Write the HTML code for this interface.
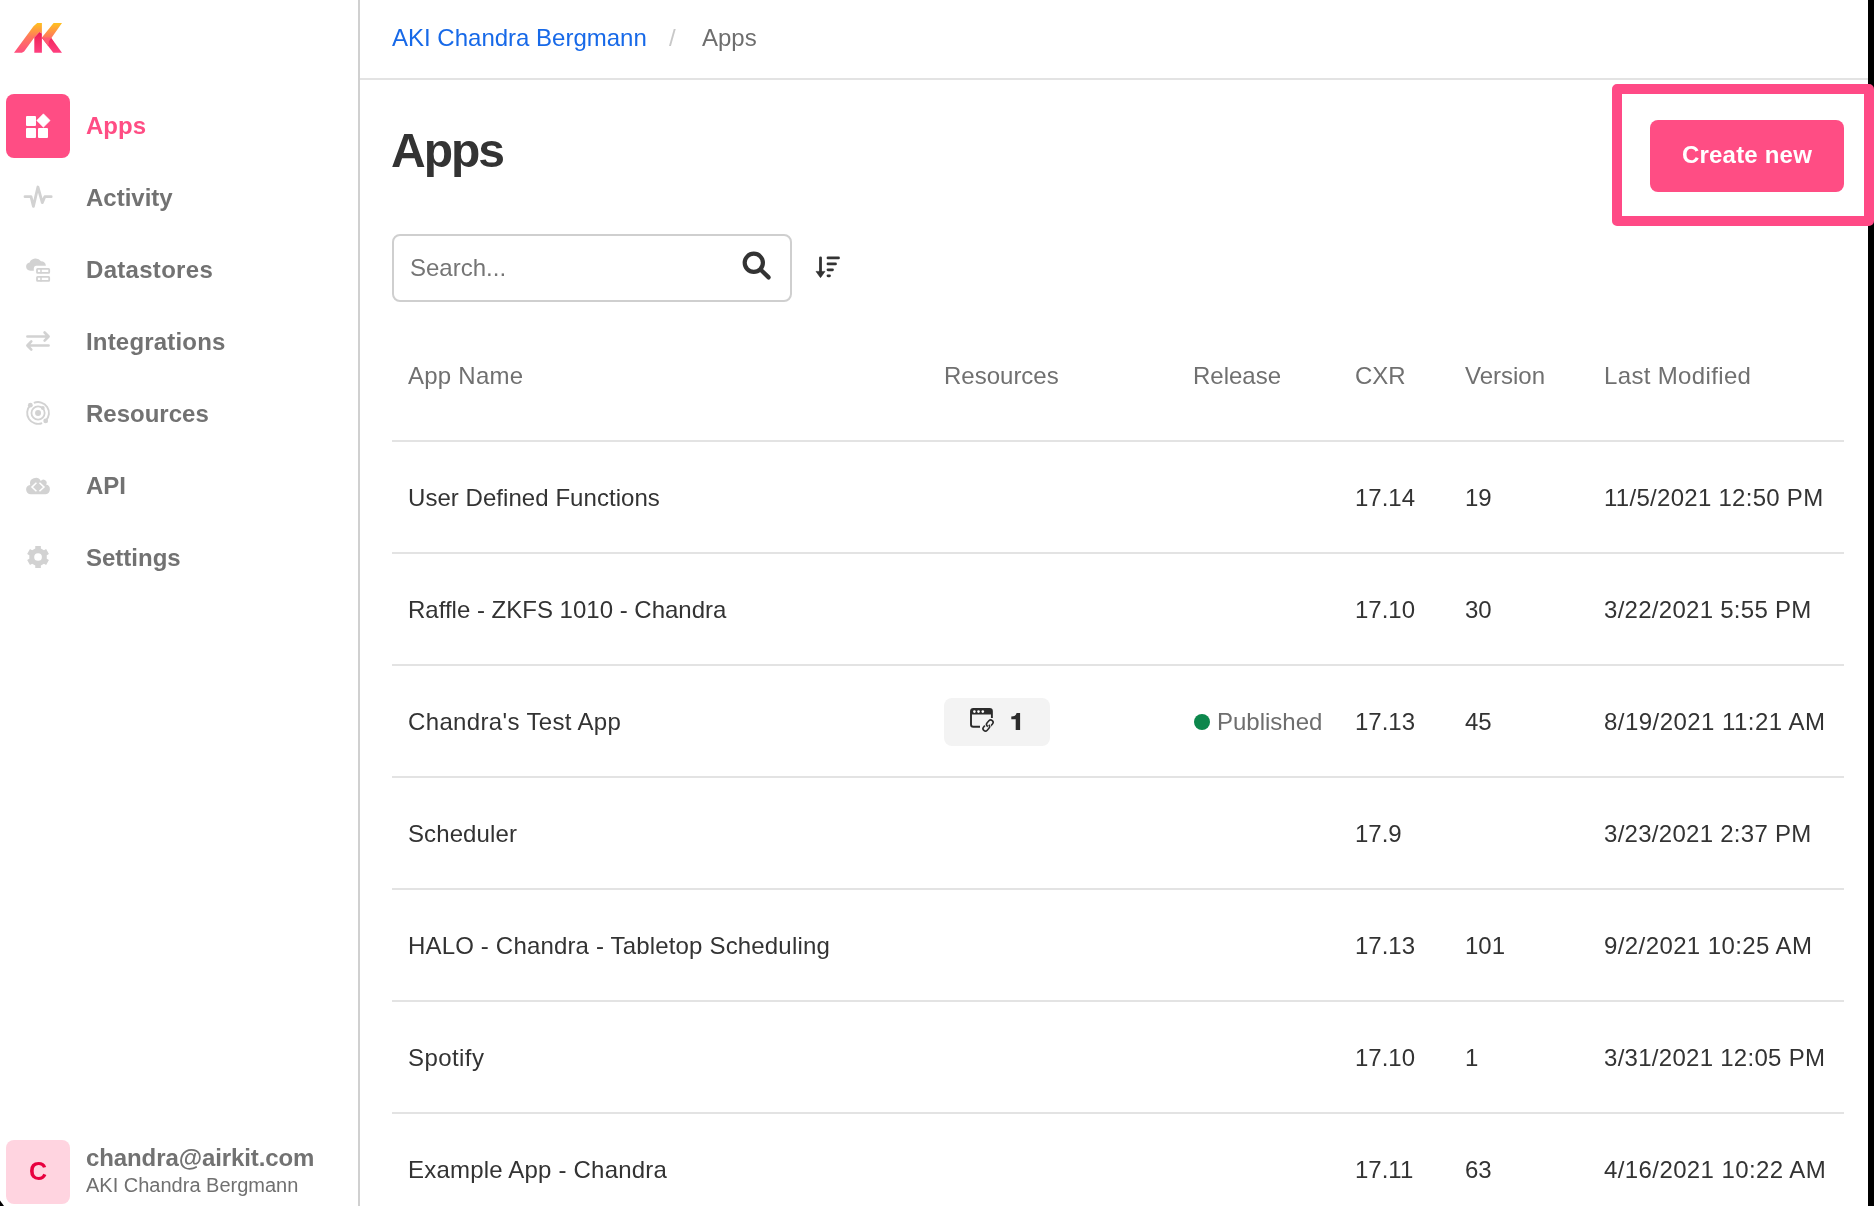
<!DOCTYPE html>
<html>
<head>
<meta charset="utf-8">
<style>
html,body{margin:0;padding:0;}
body{width:1874px;height:1206px;position:relative;overflow:hidden;background:#fff;font-family:"Liberation Sans",sans-serif;}
.a{position:absolute;white-space:nowrap;will-change:transform;}
.t24{font-size:24px;line-height:24px;}
.t20{font-size:20px;line-height:20px;}
.b{font-weight:bold;}
#sidebar{position:absolute;left:0;top:0;width:358px;height:1206px;border-right:2px solid #d0d0d0;}
#hdr{position:absolute;left:360px;top:78px;width:1514px;height:2px;background:#e3e3e3;}
.nav{color:#727272;font-weight:bold;}
.ico{position:absolute;z-index:2;}
.hline{position:absolute;left:392px;width:1452px;height:2px;background:#e3e3e3;}
.th{color:#707070;}
.td{color:#333333;}
#blackstrip{position:absolute;left:1868px;top:0;width:6px;height:1206px;background:#000;}
</style>
</head>
<body>
<div id="sidebar"></div>
<div id="hdr"></div>
<div id="blackstrip"></div>
<svg class="ico" style="left:0;top:1196px" width="10" height="10" viewBox="0 1196 10 10"><path d="M0,1200.5 L4,1206 L0,1206 Z" fill="#000"/></svg>

<!-- logo -->
<svg class="ico" style="left:0;top:0" width="80" height="70" viewBox="0 0 80 70">
  <defs>
    <linearGradient id="lg1" x1="0" y1="23" x2="0" y2="53" gradientUnits="userSpaceOnUse">
      <stop offset="0" stop-color="#FFC21E"/>
      <stop offset="0.45" stop-color="#FF7A5A"/>
      <stop offset="1" stop-color="#FF4D80"/>
    </linearGradient>
    <linearGradient id="lg2" x1="0" y1="32" x2="0" y2="53" gradientUnits="userSpaceOnUse">
      <stop offset="0" stop-color="#EC1C50"/>
      <stop offset="1" stop-color="#FF4080"/>
    </linearGradient>
  </defs>
  <path d="M14,52.7 L21.9,52.7 L24.1,51.6 L34.3,37.5 L39.4,32.1 L41.9,33.5 L41.9,23.1 L37.2,23.1 L33.5,26.2 Z" fill="url(#lg1)"/>
  <path d="M34.3,52.7 L41.9,52.7 L41.9,33.5 L39.4,32.1 L34.3,37.5 Z" fill="url(#lg2)"/>
  <path d="M41.9,37.5 L53.6,23.1 L62,23.1 L51.4,37.9 L53.6,42 L41.9,37.9 Z" fill="url(#lg1)"/>
  <path d="M41.9,37.9 L51.4,38.3 L62,52.7 L53.3,52.7 Z" fill="url(#lg2)"/>
  <path d="M41.9,37.6 L51.6,37.6 L48.9,41.3 L48.6,45.2 L47.8,45.6 Z" fill="#FF5C72"/>
</svg>

<!-- nav active -->
<div class="a" style="left:6px;top:94px;width:64px;height:64px;border-radius:8px;background:#FF4D84;"></div>
<svg class="ico" style="left:0;top:88px" width="80" height="80" viewBox="0 88 80 80">
  <rect x="26" y="116" width="10" height="10" rx="1" fill="#fff"/>
  <rect x="26" y="128" width="10" height="10" rx="1" fill="#fff"/>
  <rect x="38" y="128" width="10" height="10" rx="1" fill="#fff"/>
  <path d="M43.4,113.8 L50.1,120.5 L43.4,127.2 L36.7,120.5 Z" fill="#fff" stroke="#fff" stroke-width="0.6" stroke-linejoin="round"/>
</svg>
<div class="a t24 b" style="left:86px;top:113.7px;color:#FF4D84;">Apps</div>

<div class="a t24 nav" style="left:86px;top:185.7px;">Activity</div>
<div class="a t24 nav" style="left:86px;top:257.7px;letter-spacing:0.3px;">Datastores</div>
<div class="a t24 nav" style="left:86px;top:329.7px;letter-spacing:0.18px;">Integrations</div>
<div class="a t24 nav" style="left:86px;top:401.7px;">Resources</div>
<div class="a t24 nav" style="left:86px;top:473.7px;">API</div>
<div class="a t24 nav" style="left:86px;top:545.7px;">Settings</div>


<!-- sidebar inactive icons -->
<svg class="ico" style="left:0;top:170px" width="80" height="420" viewBox="0 170 80 420">
  <g fill="none" stroke="#d2d2d2" stroke-linecap="round" stroke-linejoin="round">
    <polyline stroke-width="2.8" points="25,196.7 31,196.7 33.4,206.4 37.9,187 42.3,202.6 44.8,196.7 51.2,196.7"/>
    <path stroke-width="2.6" d="M27.4,336.5 H47.6 M44.6,332.5 L48.6,336.5 L44.6,340.6 M48.6,345.5 H28.4 M31.3,341.4 L27.4,345.5 L31.3,349.6"/>
    <path stroke-width="1.9" stroke-linecap="butt" d="M33.84,402.94 A10.9,10.9 0 0 1 45.62,420.84 M42.13,423.11 A10.9,10.9 0 0 1 30.41,405.23"/>
    <circle cx="38.05" cy="413" r="6.6" stroke-width="1.8"/>
    <rect x="37" y="268.9" width="12.2" height="4" rx="0.6" stroke-width="1.8"/>
    <rect x="37" y="276.9" width="12.2" height="4" rx="0.6" stroke-width="1.8"/>
    <path stroke-width="1.5" d="M41,268.9 V272.9 M41,276.9 V280.9"/>
  </g>
  <g fill="#d2d2d2">
    <circle cx="30.34" cy="405.15" r="2.4"/>
    <circle cx="45.69" cy="420.91" r="2.4"/>
    <circle cx="42.82" cy="407.88" r="1.9"/>
    <circle cx="38.05" cy="413" r="3"/>
    <!-- datastore cloud -->
    <path d="M26.1,266.6 A4.3,4.3 0 0 1 29.6,262.4 A6.6,6.6 0 0 1 41,261.2 A5,5 0 0 1 45.9,265.7 L36,265.7 A2.6,2.6 0 0 0 33.8,268.2 L33.8,270.7 L30.4,270.7 A4.3,4.3 0 0 1 26.1,266.6 Z"/>
    <!-- api cloud -->
    <path d="M26.1,489.6 A4.7,4.7 0 0 1 30.2,484.9 A5.7,5.7 0 0 1 40.8,480.9 A3,3 0 0 1 46,484.6 A4.8,4.8 0 0 1 49.9,489.6 A4.7,4.7 0 0 1 45.2,494.3 L30.8,494.3 A4.7,4.7 0 0 1 26.1,489.6 Z"/>
    <path d="M35.25,548.55 L35.25,546.05 L40.85,546.05 L40.85,548.55 L43.97,550.35 L46.13,549.10 L48.93,553.95 L46.77,555.20 L46.77,558.80 L48.93,560.05 L46.13,564.90 L43.97,563.65 L40.85,565.45 L40.85,567.95 L35.25,567.95 L35.25,565.45 L32.13,563.65 L29.97,564.90 L27.17,560.05 L29.33,558.80 L29.33,555.20 L27.17,553.95 L29.970,549.10 L32.13,550.35Z"/>
  </g>
  <circle cx="38.05" cy="557" r="3.85" fill="#fff"/>
  <path d="M35.9,483.3 L31.95,487.1 L35.9,490.8 M40,483.3 L44,487.1 L40,490.8" fill="none" stroke="#fff" stroke-width="1.5" stroke-linecap="square"/>
</svg>

<!-- search icon -->
<svg class="ico" style="left:730px;top:240px" width="50" height="50" viewBox="730 240 50 50">
  <circle cx="753.8" cy="262.8" r="9.1" fill="none" stroke="#333" stroke-width="4.2"/>
  <path d="M761.5,270.5 L768.6,277.4" stroke="#333" stroke-width="4.3" stroke-linecap="round"/>
</svg>

<!-- sort icon -->
<svg class="ico" style="left:805px;top:245px" width="45" height="40" viewBox="805 245 45 40">
  <g stroke="#333" stroke-width="2.8" stroke-linecap="round" fill="none">
    <path d="M820.5,257.8 V272"/>
    <path d="M828,257.9 H838.5 M828,263.9 H835.5 M828,269.85 H832.5 M828,275.8 H829.5"/>
  </g>
  <path d="M816,271.4 L825,271.4 L820.5,277.7 Z" fill="#333" stroke="#333" stroke-width="0.6" stroke-linejoin="round"/>
</svg>

<!-- badge icon -->
<svg class="ico" style="left:960px;top:700px" width="40" height="40" viewBox="960 700 40 40">
  <path d="M980,726.8 H973.3 A2.3,2.3 0 0 1 971,724.5 V711 A2.3,2.3 0 0 1 973.3,708.9 H989.6 A2.3,2.3 0 0 1 991.9,711.2 V718" fill="none" stroke="#2b2b2b" stroke-width="1.9"/>
  <rect x="971" y="708.9" width="20.9" height="5.6" rx="1.5" fill="#2b2b2b"/>
  <circle cx="974.4" cy="711.6" r="1.3" fill="#fff"/>
  <circle cx="978.5" cy="711.6" r="1.3" fill="#fff"/>
  <circle cx="982.8" cy="711.6" r="1.3" fill="#fff"/>
  <g fill="none" stroke="#f3f3f3" stroke-width="3.6">
    <rect x="-3.7" y="-2.4" width="7.4" height="4.8" rx="2.4" transform="translate(989.8,723.4) rotate(-48)"/>
    <rect x="-3.7" y="-2.4" width="7.4" height="4.8" rx="2.4" transform="translate(986.3,727.6) rotate(-48)"/>
  </g>
  <rect x="-3.7" y="-2.4" width="7.4" height="4.8" rx="2.4" fill="none" stroke="#2b2b2b" stroke-width="1.6" transform="translate(989.8,723.4) rotate(-48)"/>
  <path d="M0.5,-2.4 H-1.3 A2.4,2.4 0 0 0 -1.3,2.4 H1.3 A2.4,2.4 0 0 0 3.7,0" fill="none" stroke="#f3f3f3" stroke-width="3.2" transform="translate(986.3,727.6) rotate(-48)"/>
  <path d="M0.5,-2.4 H-1.3 A2.4,2.4 0 0 0 -1.3,2.4 H1.3 A2.4,2.4 0 0 0 3.7,0" fill="none" stroke="#2b2b2b" stroke-width="1.6" transform="translate(986.3,727.6) rotate(-48)"/>
</svg>

<!-- user -->
<div class="a" style="left:6px;top:1140px;width:64px;height:64px;border-radius:8px;background:#FFD4E0;"></div>
<div class="a b" style="left:6px;top:1158.5px;width:64px;text-align:center;color:#E8003F;font-size:25px;line-height:25px;">C</div>
<div class="a t24 b" style="left:86px;top:1145.7px;color:#727272;letter-spacing:-0.1px;">chandra@airkit.com</div>
<div class="a t20" style="left:86px;top:1175px;color:#707070;">AKI Chandra Bergmann</div>

<!-- breadcrumb -->
<div class="a t24" style="left:392px;top:25.7px;color:#1769E8;">AKI Chandra Bergmann</div>
<div class="a t24" style="left:669px;top:25.7px;color:#c8c8c8;">/</div>
<div class="a t24" style="left:702px;top:25.7px;color:#6e6e6e;">Apps</div>

<!-- title -->
<div class="a b" style="left:391px;top:127.4px;font-size:48px;line-height:48px;letter-spacing:-2px;color:#333333;">Apps</div>

<!-- search -->
<div class="a" style="left:392px;top:234px;width:396px;height:64px;border:2px solid #cfcfcf;border-radius:8px;"></div>
<div class="a t24" style="left:410px;top:256px;color:#757575;">Search...</div>

<!-- create new -->
<div class="a" style="left:1612px;top:84px;width:262px;height:142px;box-sizing:border-box;border:10px solid #FF4A86;border-radius:5px;"></div>
<div class="a" style="left:1650px;top:120px;width:194px;height:72px;border-radius:8px;background:#FF4D84;"></div>
<div class="a t24 b" style="left:1650px;top:143.4px;width:194px;text-align:center;color:#fff;letter-spacing:0.2px;">Create new</div>

<!-- table -->
<div class="a t24 th" style="left:408px;top:363.7px;letter-spacing:0.25px;">App Name</div>
<div class="a t24 th" style="left:944px;top:363.7px;">Resources</div>
<div class="a t24 th" style="left:1193px;top:363.7px;">Release</div>
<div class="a t24 th" style="left:1355px;top:363.7px;">CXR</div>
<div class="a t24 th" style="left:1465px;top:363.7px;">Version</div>
<div class="a t24 th" style="left:1604px;top:363.7px;letter-spacing:0.35px;">Last Modified</div>

<div class="hline" style="top:440px"></div>
<div class="hline" style="top:552px"></div>
<div class="hline" style="top:664px"></div>
<div class="hline" style="top:776px"></div>
<div class="hline" style="top:888px"></div>
<div class="hline" style="top:1000px"></div>
<div class="hline" style="top:1112px"></div>

<div class="a t24 td" style="letter-spacing:0.05px;left:408px;top:485.7px;">User Defined Functions</div>
<div class="a t24 td" style="left:1355px;top:485.7px;">17.14</div>
<div class="a t24 td" style="left:1465px;top:485.7px;">19</div>
<div class="a t24 td" style="letter-spacing:0.28px;left:1604px;top:485.7px;">11/5/2021 12:50 PM</div>

<div class="a t24 td" style="letter-spacing:0px;left:408px;top:597.7px;">Raffle - ZKFS 1010 - Chandra</div>
<div class="a t24 td" style="left:1355px;top:597.7px;">17.10</div>
<div class="a t24 td" style="left:1465px;top:597.7px;">30</div>
<div class="a t24 td" style="letter-spacing:0.28px;left:1604px;top:597.7px;">3/22/2021 5:55 PM</div>

<div class="a t24 td" style="letter-spacing:0.35px;left:408px;top:709.7px;">Chandra's Test App</div>
<div class="a" style="left:944px;top:698px;width:106px;height:48px;border-radius:8px;background:#f3f3f3;"></div>
<svg class="ico" style="left:1005px;top:708px" width="20" height="26" viewBox="1005 708 20 26"><path d="M1015.7,730 L1020.1,730 L1020.1,713 L1016.6,713 C1016.2,715.6 1014.2,716.3 1011.3,716.4 L1011.3,719.2 L1015.7,719.2 Z" fill="#2b2b2b"/></svg>
<div class="a" style="left:1194px;top:714px;width:16px;height:16px;border-radius:50%;background:#0C874C;"></div>
<div class="a t24" style="left:1217px;top:709.7px;color:#6e6e6e;">Published</div>
<div class="a t24 td" style="left:1355px;top:709.7px;">17.13</div>
<div class="a t24 td" style="left:1465px;top:709.7px;">45</div>
<div class="a t24 td" style="letter-spacing:0.46px;left:1604px;top:709.7px;">8/19/2021 11:21 AM</div>

<div class="a t24 td" style="letter-spacing:0.1px;left:408px;top:821.7px;">Scheduler</div>
<div class="a t24 td" style="left:1355px;top:821.7px;">17.9</div>
<div class="a t24 td" style="letter-spacing:0.28px;left:1604px;top:821.7px;">3/23/2021 2:37 PM</div>

<div class="a t24 td" style="letter-spacing:0.17px;left:408px;top:933.7px;">HALO - Chandra - Tabletop Scheduling</div>
<div class="a t24 td" style="left:1355px;top:933.7px;">17.13</div>
<div class="a t24 td" style="left:1465px;top:933.7px;">101</div>
<div class="a t24 td" style="letter-spacing:0.4px;left:1604px;top:933.7px;">9/2/2021 10:25 AM</div>

<div class="a t24 td" style="letter-spacing:0.43px;left:408px;top:1045.7px;">Spotify</div>
<div class="a t24 td" style="left:1355px;top:1045.7px;">17.10</div>
<div class="a t24 td" style="left:1465px;top:1045.7px;">1</div>
<div class="a t24 td" style="letter-spacing:0.28px;left:1604px;top:1045.7px;">3/31/2021 12:05 PM</div>

<div class="a t24 td" style="letter-spacing:0.2px;left:408px;top:1157.7px;">Example App - Chandra</div>
<div class="a t24 td" style="left:1355px;top:1157.7px;">17.11</div>
<div class="a t24 td" style="left:1465px;top:1157.7px;">63</div>
<div class="a t24 td" style="letter-spacing:0.4px;left:1604px;top:1157.7px;">4/16/2021 10:22 AM</div>

</body>
</html>
